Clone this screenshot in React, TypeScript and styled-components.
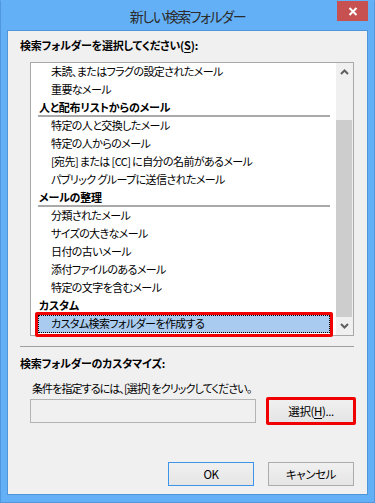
import React from "react";
import styled, { createGlobalStyle } from "styled-components";

const GlobalStyle = createGlobalStyle`
  html, body { margin: 0; padding: 0; background: #64b0f7; }
  * { box-sizing: border-box; }
  body {
    font-family: "Noto Sans CJK JP", "Noto Sans", sans-serif;
    font-feature-settings: "palt";
  }
`;

const Window = styled.div`
  width: 375px;
  height: 503px;
  background: #64b0f7;
  border: 1px solid #4f97de;
  border-top-color: #64b0f7;
  display: flex;
  flex-direction: column;
`;

const TitleBar = styled.div`
  height: 29px;
  display: grid;
  grid-template-columns: 1fr auto 1fr;
  align-items: center;
`;

const Title = styled.div`
  grid-column: 2;
  font-size: 14px;
  color: #2b2b2b;
  letter-spacing: -1.4px;
`;

const CloseButton = styled.div`
  grid-column: 3;
  justify-self: end;
  align-self: start;
  width: 31px;
  height: 20px;
  margin-right: 6px;
  background: #c75050;
  display: flex;
  align-items: center;
  justify-content: center;
`;

const Client = styled.div`
  flex: 1;
  margin: 0 6px 7px 6px;
  background: #f0f0f0;
  border: 1px solid #4f95da;
  display: flex;
  flex-direction: column;
  padding: 6px 13px 8px 12px;
`;

const GroupLabel = styled.div`
  font-size: 11px;
  font-weight: 700;
  line-height: 16px;
  color: #000;
  letter-spacing: -0.2px;
`;

const Underline = styled.span`
  text-decoration: underline;
  text-underline-offset: 2px;
`;

const ListBox = styled.div`
  margin: 9px 0 0 10px;
  height: 274px;
  border: 1px solid #a8a8a8;
  background: #fff;
  display: flex;
`;

const ListContent = styled.div`
  flex: 1;
  padding: 0 6px 0 7px;
  display: flex;
  flex-direction: column;
`;

const Row = styled.div<{ $kind: "item" | "header" | "selected" }>`
  position: relative;
  height: 18px;
  line-height: ${(p) => (p.$kind === "header" ? "16px" : "17px")};
  font-size: 11px;
  color: #000;
  white-space: nowrap;
  letter-spacing: ${(p) => (p.$kind === "header" ? "-0.2px" : "-0.6px")};
  font-weight: ${(p) => (p.$kind === "header" ? 700 : 400)};
  padding-left: ${(p) => (p.$kind === "header" ? "1px" : "13px")};
  border-bottom: ${(p) => (p.$kind === "header" ? "2px solid #a9a9a9" : "none")};
  background: ${(p) => (p.$kind === "selected" ? "#a8cbef" : "transparent")};
  outline: ${(p) => (p.$kind === "selected" ? "1px dotted #000" : "none")};
  outline-offset: -1px;
  &::after {
    content: "";
    display: ${(p) => (p.$kind === "selected" ? "block" : "none")};
    position: absolute;
    inset: -3px -3px -4px -3px;
    border: 3px solid #f00000;
    border-radius: 2px;
    pointer-events: none;
  }
`;

const Scrollbar = styled.div`
  width: 17px;
  background: #f0f0f0;
  display: flex;
  flex-direction: column;
  padding-bottom: 1px;
`;

const ArrowButton = styled.div`
  height: 17px;
  display: flex;
  align-items: center;
  justify-content: center;
`;

const Track = styled.div`
  flex: 1;
  padding: 40px 1px 0 0;
  display: flex;
`;

const Thumb = styled.div`
  flex: 1;
  background: #cdcdcd;
`;

const Separator = styled.div`
  margin-top: 10px;
  height: 1px;
  background: #a0a0a0;
`;

const SectionLabel = styled(GroupLabel)`
  margin-top: 8px;
`;

const Hint = styled.div`
  margin: 9px 0 0 12px;
  font-size: 11px;
  line-height: 16px;
  color: #000;
  letter-spacing: -0.9px;
`;

const InputRow = styled.div`
  margin: 3px 0 0 10px;
  display: flex;
  gap: 12px;
  align-items: center;
`;

const TextInput = styled.div`
  width: 227px;
  height: 24px;
  border: 1px solid #b4b4b4;
  background: #f0f0f0;
`;

const Button = styled.div<{ $default?: boolean; $marked?: boolean }>`
  position: relative;
  width: 86px;
  height: 24px;
  border: 1px solid ${(p) => (p.$default ? "#3c95e8" : "#acacac")};
  background: linear-gradient(#f0f0f0, #e5e5e5);
  font-size: 11.5px;
  color: #000;
  display: flex;
  align-items: center;
  justify-content: center;
  letter-spacing: -0.4px;
  &::after {
    content: "";
    display: ${(p) => (p.$marked ? "block" : "none")};
    position: absolute;
    inset: -3px;
    border: 3px solid #f00000;
    border-radius: 2px;
  }
`;

const ButtonRow = styled.div`
  margin-top: auto;
  display: flex;
  justify-content: flex-end;
  gap: 14px;
`;

type Item = { text: string; kind: "item" | "header" | "selected" };

const items: Item[] = [
  { text: "未読、またはフラグの設定されたメール", kind: "item" },
  { text: "重要なメール", kind: "item" },
  { text: "人と配布リストからのメール", kind: "header" },
  { text: "特定の人と交換したメール", kind: "item" },
  { text: "特定の人からのメール", kind: "item" },
  { text: "[宛先] または [CC] に自分の名前があるメール", kind: "item" },
  { text: "パブリック グループに送信されたメール", kind: "item" },
  { text: "メールの整理", kind: "header" },
  { text: "分類されたメール", kind: "item" },
  { text: "サイズの大きなメール", kind: "item" },
  { text: "日付の古いメール", kind: "item" },
  { text: "添付ファイルのあるメール", kind: "item" },
  { text: "特定の文字を含むメール", kind: "item" },
  { text: "カスタム", kind: "header" },
  { text: "カスタム検索フォルダーを作成する", kind: "selected" },
];

const Chevron = ({ up }: { up?: boolean }) => (
  <svg width="9" height="6" viewBox="0 0 9 6">
    <polyline
      points={up ? "1,5 4.5,1.5 8,5" : "1,1 4.5,4.5 8,1"}
      fill="none"
      stroke="#606060"
      strokeWidth="2"
    />
  </svg>
);

export default function App() {
  return (
    <>
      <GlobalStyle />
      <Window>
        <TitleBar>
          <Title>新しい検索フォルダー</Title>
          <CloseButton>
            <svg width="10" height="9" viewBox="0 0 10 9">
              <path d="M1.5 1 L8.5 8 M8.5 1 L1.5 8" stroke="#fff" strokeWidth="2" />
            </svg>
          </CloseButton>
        </TitleBar>
        <Client>
          <GroupLabel>
            検索フォルダーを選択してください(<Underline>S</Underline>):
          </GroupLabel>
          <ListBox>
            <ListContent>
              {items.map((it) => (
                <Row key={it.text} $kind={it.kind}>
                  {it.text}
                </Row>
              ))}
            </ListContent>
            <Scrollbar>
              <ArrowButton>
                <Chevron up />
              </ArrowButton>
              <Track>
                <Thumb />
              </Track>
              <ArrowButton>
                <Chevron />
              </ArrowButton>
            </Scrollbar>
          </ListBox>
          <Separator />
          <SectionLabel>検索フォルダーのカスタマイズ:</SectionLabel>
          <Hint>条件を指定するには、[選択] をクリックしてください。</Hint>
          <InputRow>
            <TextInput />
            <Button $marked>
              選択(<Underline>H</Underline>)...
            </Button>
          </InputRow>
          <ButtonRow>
            <Button $default>OK</Button>
            <Button>キャンセル</Button>
          </ButtonRow>
        </Client>
      </Window>
    </>
  );
}
